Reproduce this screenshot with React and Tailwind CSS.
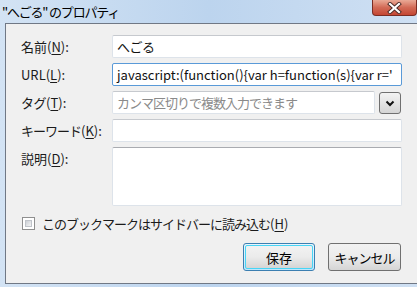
import React from 'react';

const font = { fontFamily: '"Noto Sans CJK JP", "Liberation Sans", sans-serif' };

function Acc({ k }) {
  return (
    <span className="tracking-normal">
      (<span className="underline underline-offset-2">{k}</span>)
    </span>
  );
}

function Field({ children, className = '', color = 'text-[#111]', border = 'border-[#dde3ea] border-t-[#c6c9ce]' }) {
  return (
    <div
      className={`h-[23px] bg-white border rounded-[2px] px-[4px] flex items-center overflow-hidden whitespace-nowrap text-[13px] leading-none ${border} ${color} ${className}`}
    >
      {children}
    </div>
  );
}

function Row({ label, children }) {
  return (
    <div className="flex">
      <div className="w-[92px] h-[23px] flex items-center text-[13px] leading-none text-[#1b1b1b]">
        {label}
      </div>
      {children}
    </div>
  );
}

export default function App() {
  return (
    <div
      className="w-[417px] h-[287px] overflow-hidden relative bg-gradient-to-r from-[#d3e3f4] via-[#bcd4ee] to-[#cfe0f3] flex flex-col"
      style={font}
    >
      {/* title bar */}
      <div className="h-[23px] shrink-0 flex items-center pl-[2px] text-[13px] leading-none text-black tracking-[-1.2px]">
        "へごる" のプロパティ
      </div>
      <div className="absolute right-0 top-0 w-[45px] h-[16px] rounded-b-[4px] border border-t-0 border-[#7a2d24] bg-gradient-to-b from-[#e9a996] via-[#d26a56] to-[#c44633] flex items-center justify-center">
        <svg width="15" height="12" viewBox="0 0 15 12">
          <path d="M3 2 L12 10 M12 2 L3 10" stroke="#4a2a26" strokeWidth="4" strokeLinecap="square" />
          <path d="M3 2 L12 10 M12 2 L3 10" stroke="#ffffff" strokeWidth="2.2" strokeLinecap="square" />
        </svg>
      </div>

      {/* body */}
      <div className="ml-[5px] h-[261px] shrink-0 border-l border-t border-b border-[#707885] bg-[#f0f0f0] pt-[11px] pl-[15px] flex flex-col">
        <div className="flex flex-col gap-[5px]">
          <Row label={<>名前<Acc k="N" />:</>}>
            <Field className="w-[290px] ml-[-1px] tracking-[-0.5px]">へごる</Field>
          </Row>
          <Row label={<>URL<Acc k="L" />:</>}>
            <Field className="w-[290px] ml-[-1px]" border="border-[#5a9ad8]">
              javascript:(function(){'{'}var h=function(s){'{'}var r='
            </Field>
          </Row>
          <Row label={<span className="tracking-[-0.5px]">タグ<Acc k="T" />:</span>}>
            <Field className="w-[263px] ml-[-1px] tracking-[-1px]" color="text-[#8a8a8a]">
              カンマ区切りで複数入力できます
            </Field>
            <div className="ml-[4px] mt-[1px] w-[22px] h-[22px] rounded-[3px] border border-[#707070] bg-gradient-to-b from-[#f3f3f3] to-[#d5d5d5] flex items-center justify-center">
              <svg width="10" height="7" viewBox="0 0 10 7">
                <path d="M1.5 1.5 L5 5 L8.5 1.5" fill="none" stroke="#111" strokeWidth="2" />
              </svg>
            </div>
          </Row>
          <Row label={<span className="tracking-[-1px]">キーワード<Acc k="K" />:</span>}>
            <Field className="w-[290px] ml-[-1px]" />
          </Row>
          <Row label={<>説明<Acc k="D" />:</>}>
            <div className="w-[290px] ml-[-1px] h-[59px] bg-white border border-[#dde3ea] border-t-[#a9abb0] rounded-[2px]" />
          </Row>
        </div>

        <div className="flex items-center mt-[11px] ml-[1px]">
          <div className="w-[13px] h-[13px] border border-[#8f8f8f] bg-white p-[2px]">
            <div className="w-full h-full bg-gradient-to-br from-[#cbcfd5] to-[#f4f4f4] border border-[#c0c4ca]" />
          </div>
          <div className="ml-[7px] text-[13px] leading-none text-[#1b1b1b] tracking-[-1px]">
            このブックマークはサイドバーに読み込む<Acc k="H" />
          </div>
        </div>

        <div className="flex justify-end gap-[13px] mt-[13px] pr-[16px]">
          <div className="w-[72px] h-[28px] rounded-[3px] border border-[#3c7fb1] bg-gradient-to-b from-[#eaf6fd] via-[#d9f0fc] to-[#bee6fd] p-[1px]">
            <div className="w-full h-full rounded-[2px] border border-[#48d5f5] bg-gradient-to-b from-[#f2f2f2] via-[#ebebeb] to-[#d5d5d5] flex items-center justify-center text-[13px] leading-none text-black">
              保存
            </div>
          </div>
          <div className="w-[73px] h-[28px] rounded-[3px] border border-[#707070] bg-gradient-to-b from-[#f2f2f2] via-[#ebebeb] to-[#d5d5d5] flex items-center justify-center text-[13px] leading-none text-black tracking-[-1px]">
            キャンセル
          </div>
        </div>
      </div>
    </div>
  );
}
